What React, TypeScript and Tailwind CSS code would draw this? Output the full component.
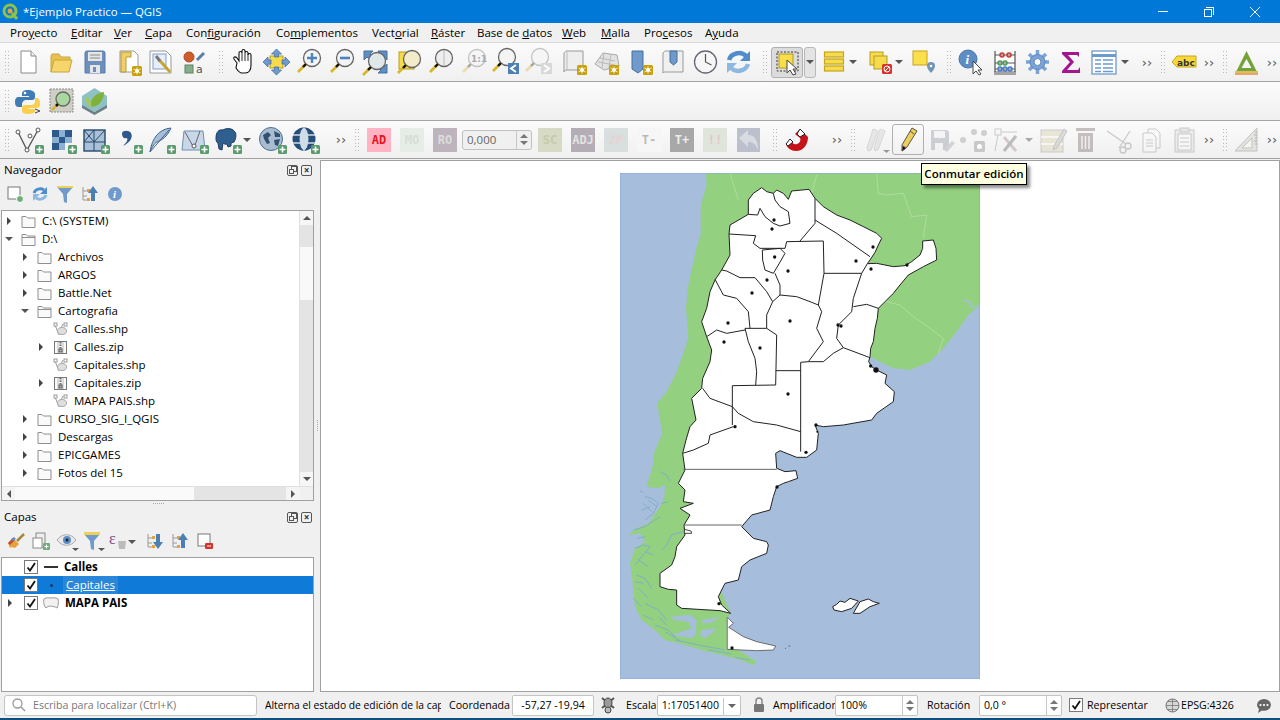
import React from "react";

const S = ({ w = 33, h = 32, children }: { w?: number; h?: number; children: React.ReactNode }) => (
  <svg width={w} height={h} viewBox={`0 0 ${w} ${h}`} className="block shrink-0">{children}</svg>
);
const Slot = ({ className = "w-[33px]", children }: { className?: string; children?: React.ReactNode }) => (
  <div className={`${className} shrink-0 flex items-center justify-center overflow-visible`}>{children}</div>
);
const Grip = ({ className = "" }: { className?: string }) => (
  <div className={`${className} w-[4px] h-[22px] shrink-0 grid grid-cols-2 gap-[1px] content-between`}>
    {Array.from({ length: 14 }).map((_, i) => <span key={i} className="w-[1px] h-[1px] bg-[#b8b8b8]" />)}
  </div>
);
const Arrow = ({ className = "w-[8px] ml-0", dim = false }: { className?: string; dim?: boolean }) => (
  <div className={`${className} shrink-0 flex justify-center`}>
    <div className={`w-0 h-0 border-x-[4px] border-x-transparent border-t-[4px] ${dim ? "border-t-[#a8a8a8]" : "border-t-[#555555]"}`} />
  </div>
);
const More = ({ className = "" }: { className?: string }) => (
  <div className={`${className} w-[16px] shrink-0 text-center text-[13px] leading-none text-[#555555] font-['DejaVu_Sans',sans-serif]`}>››</div>
);
const Badge = ({ x = 22, y = 21 }: { x?: number; y?: number }) => (
  <g>
    <rect x={x} y={y} width="10" height="10" rx="1.5" fill="#c9a008" />
    <circle cx={x + 5} cy={y + 5} r="2" fill="#fff" />
    <path d={`M${x + 5} ${y + 1.5}v7M${x + 1.5} ${y + 3}l7 4M${x + 8.5} ${y + 3}l-7 4`} stroke="#fff" strokeWidth=".8" />
  </g>
);
const Plus = ({ x = 22, y = 21 }: { x?: number; y?: number }) => (
  <g>
    <rect x={x} y={y} width="9" height="9" rx="1.5" fill="#5b9a6d" />
    <path d={`M${x + 4.5} ${y + 1.5}v6M${x + 1.5} ${y + 4.5}h6`} stroke="#fff" strokeWidth="1.6" />
  </g>
);
const Mag = ({ dim = false, cx = 19, cy = 12, fill = "#f4f4f4" }: { dim?: boolean; cx?: number; cy?: number; fill?: string }) => (
  <g opacity={dim ? 0.35 : 1}>
    <circle cx={cx} cy={cy} r="8.5" fill={fill} stroke="#666" strokeWidth="1.3" />
    <path d={`M${cx - 6} ${cy + 6}L${cx - 14} ${cy + 14}`} stroke="#d8b52a" strokeWidth="2.6" />
    <path d={`M${cx - 6} ${cy + 6}L${cx - 9} ${cy + 9}`} stroke="#111" strokeWidth="2.4" />
  </g>
);

const I: Record<string, React.ReactNode> = {
  doc: <S><path d="M9 5h10l5 5v17H9z" fill="#fff" stroke="#8a8a8a" /><path d="M19 5v5h5" fill="#eee" stroke="#8a8a8a" /></S>,
  open: <S><path d="M6 26V10l1-2h7l2 3h9v4" fill="#e8c14f" stroke="#c8a63c" /><path d="M6 26l3-12h18l-3 12z" fill="#f6d56a" stroke="#c8a63c" /></S>,
  save: <S><path d="M7 7a2 2 0 012-2h16a2 2 0 012 2v20H7z" fill="#6d8fbb" stroke="#5a7ba6" /><rect x="10" y="6" width="14" height="9" fill="#e6e6e6" /><path d="M12 9h10M12 12h10" stroke="#888" /><rect x="12" y="19" width="10" height="8" fill="#e6e6e6" /><rect x="15" y="21" width="3" height="5" fill="#6d8fbb" /></S>,
  layout: <S><path d="M9 5h14l4 4v17H9z" fill="#fff" stroke="#999" /><path d="M10 6h10v5h-5v15h-5z" fill="#f2cf66" stroke="#b79a3a" /><Badge x={21} y={20} /></S>,
  manager: <S><path d="M6 5h16l5 5v17H6z" fill="#fff" stroke="#999" /><rect x="9" y="8" width="13" height="15" fill="#e7eefa" stroke="#7d9ccc" /><path d="M15 14l4 4 7 8" stroke="#c7a234" strokeWidth="3" fill="none" /><path d="M12 10l4 5" stroke="#777" strokeWidth="3" /></S>,
  style: <S><circle cx="12" cy="11" r="5" fill="#cf5c2a" stroke="#a94a22" /><path d="M20 14l7-7" stroke="#5b7ea8" strokeWidth="3" /><rect x="8" y="19" width="8" height="8" fill="#84ad8b" stroke="#5d8465" /><text x="19" y="27" fontSize="11" fill="#555" fontFamily="DejaVu Sans">a</text></S>,
  hand: <S><path d="M10 17l-3-4c-1-2 1-3 3-1l2 3V7c0-2 3-2 3 0V5c0-2 3-2 3 0v2c0-2 3-2 3 0v2c0-2 3-2 3 0v10c0 5-2 8-6 8h-3c-3 0-4-2-6-5z" fill="#fff" stroke="#111" strokeWidth="1.1" /><path d="M15 7v8M18 7v8M21 8v7" stroke="#111" strokeWidth=".9" /></S>,
  pan: <S><rect x="10" y="10" width="13" height="12" fill="#f6dc4c" stroke="#b59b22" /><path d="M16.500 3l5 5h-3v3h-4V8h-3zM16.500 29l5-5h-3v-3h-4v3h-3zM3 16l5-5v3h3v4H8v3zM30 16l-5-5v3h-3v4h3v3z" fill="#6f9acb" stroke="#44709f" strokeWidth=".8" /></S>,
  zin: <S><Mag /><path d="M19 7v10M14 12h10" stroke="#4d84bf" strokeWidth="2.4" /></S>,
  zout: <S><Mag /><path d="M14 12h10" stroke="#4d84bf" strokeWidth="2.6" /></S>,
  zfull: <S><path d="M5 5h9l-3 3 3 3-3 3-3-3-3 3z M28 5v9l-3-3-3 3-3-3 3-3-3-3z M28 27h-9l3-3-3-3 3-3 3 3 3-3z" fill="#5f8ec4" stroke="#44709f" /><Mag cx={18} cy={15} fill="#dfe7e8" /></S>,
  zsel: <S><rect x="7" y="6" width="15" height="17" fill="#f6dc4c" stroke="#b59b22" /><Mag cx={20} cy={13} fill="#f3eccb" /></S>,
  zlayer: <S><Mag cx={19} cy={12} fill="#eeeeee" /><path d="M19 4v16" stroke="#bbb" /></S>,
  znat: <S><Mag dim /><text x="13" y="16" fontSize="9" fontWeight="700" fill="#aaa" fontFamily="DejaVu Sans">1:1</text></S>,
  zlast: <S><Mag cx={16} cy={11} /><rect x="17" y="17" width="11" height="11" fill="#4d7fb5" /><path d="M25 19l-5 3.500 5 3.500" stroke="#fff" strokeWidth="2" fill="none" /></S>,
  znext: <S><Mag dim cx={16} cy={11} /><rect x="17" y="17" width="11" height="11" fill="#d8d8d8" /><path d="M20 19l5 3.500-5 3.500" stroke="#fff" strokeWidth="2" fill="none" /></S>,
  mapnew: <S><path d="M7 8c0-3 3-3 3-3h16v19H10c-2 0-3 1-3 2z" fill="#eeeeee" stroke="#999" /><path d="M10 5v19" stroke="#bbb" /><Badge x={20} y={19} /></S>,
  map3d: <S><path d="M5 18l8-11 14 2 2 11-15 4z" fill="#e2e2e2" stroke="#aaa" /><path d="M10 12l15 3M8 16l17 3M14 7l-2 15M21 8l-2 14" stroke="#bbb" /><Badge x={19} y={19} /></S>,
  bmnew: <S><path d="M9 5h11v18l-5 4-6-4z" fill="#6f9acb" stroke="#44709f" /><Badge x={20} y={19} /></S>,
  bmshow: <S><path d="M7 8c0-3 3-3 3-3h17v21H10c-2 0-3 0-3 1z" fill="#f0f0f0" stroke="#999" /><path d="M14 5h7v11l-3.500 3-3.500-3z" fill="#6f9acb" stroke="#44709f" /></S>,
  clock: <S><circle cx="16.5" cy="16" r="11" fill="#f6f6f6" stroke="#667" strokeWidth="1.3" /><path d="M16.500 8v8l6 3" stroke="#555" strokeWidth="1.2" fill="none" /></S>,
  refresh: <S><path d="M7 14a10 9 0 0117-4" fill="none" stroke="#4f8cc9" strokeWidth="4.500" /><path d="M28 5v10H18z" fill="#4f8cc9" /><path d="M26 18a10 9 0 01-17 4" fill="none" stroke="#8db8e0" strokeWidth="4.500" /><path d="M5 27V17h10z" fill="#8db8e0" /></S>,
  select: <S><rect x="6" y="6" width="21" height="19" fill="none" stroke="#333" strokeDasharray="2 1.500" /><rect x="8" y="8" width="14" height="14" fill="#f8de48" stroke="#b59b22" /><path d="M16 14l0 13 3-3 3 5 3-1-3-5h4z" fill="#fff" stroke="#444" /></S>,
  bars: <S w={22}><g fill="#f6dc4c" stroke="#c5a31a" strokeWidth="1.2"><rect x="1.500" y="6" width="19" height="5" /><rect x="1.500" y="13" width="19" height="5" /><rect x="1.500" y="20" width="19" height="5" /></g></S>,
  desel: <S><rect x="8" y="6" width="13" height="13" fill="#f6dc4c" stroke="#b59b22" /><rect x="12" y="10" width="13" height="13" fill="#f6dc4c" stroke="#b59b22" /><rect x="20" y="18" width="10" height="10" rx="1.500" fill="#d4342e" /><circle cx="25" cy="23" r="3" fill="none" stroke="#fff" /><path d="M23 25l4-4" stroke="#fff" /></S>,
  sloc: <S><rect x="7" y="5" width="14" height="14" fill="#fbe04c" stroke="#c5a31a" /><path d="M25 16a4 4 0 00-4 4c0 3 4 7 4 7s4-4 4-7a4 4 0 00-4-4z" fill="#6f96b8" /><circle cx="25" cy="20" r="1.300" fill="#fff" /></S>,
  identify: <S><circle cx="14" cy="13" r="9" fill="#5d8dc4" stroke="#4a76a8" /><text x="11.500" y="18" fontSize="13" fontWeight="700" fontStyle="italic" fill="#fff" fontFamily="Liberation Serif">i</text><path d="M19 15v13l3-3 3 4 2-1-3-4h4z" fill="#fff" stroke="#444" /></S>,
  abacus: <S><rect x="7" y="8" width="20" height="18" fill="#fff" /><path d="M7 5v21M27 5v21M6 26h22M6 28h22" stroke="#555" strokeWidth="1.200" /><path d="M7 9h20M7 17h20M7 23h20" stroke="#555" /><g fill="none" strokeWidth="1.500"><circle cx="14" cy="9" r="2" stroke="#c33" /><circle cx="21" cy="9" r="2" stroke="#c33" /><circle cx="12" cy="17" r="2" stroke="#4a9a5a" /><circle cx="17" cy="17" r="2" stroke="#4a9a5a" /><circle cx="12" cy="23" r="2" stroke="#47c" /><circle cx="17" cy="23" r="2" stroke="#47c" /><circle cx="22" cy="23" r="2" stroke="#47c" /></g></S>,
  gear: <S><g stroke="#7ba4d6" strokeWidth="3.500"><path d="M16.500 4v24M5 16h23M8 8l17 16M25 8L8 24" /></g><circle cx="16.500" cy="16" r="7.500" fill="#7ba4d6" stroke="#5a86bb" /><circle cx="16.500" cy="16" r="3.500" fill="#fff" stroke="#5a86bb" /></S>,
  sigma: <S><path d="M8 6h17v5l-2-2H14l6 7-7 8h11l2-3v6H8v-2l8-9-8-8z" fill="#a3168f" /></S>,
  table: <S><rect x="5" y="5" width="24" height="23" fill="#fff" stroke="#6f9acb" strokeWidth="1.300" /><path d="M5 9.500h24" stroke="#6f9acb" strokeWidth="3" /><path d="M8 14h6M16 14h10M8 18h6M16 18h10M8 22h6M16 22h10M8 25.500h6M16 25.500h10" stroke="#6f9acb" strokeWidth="1.300" /></S>,
  abc: <S w={30}><path d="M4 16l5-6h19v11H9z" fill="#f8d93a" stroke="#c8a41a" /><text x="9" y="19.500" fontSize="9" fontWeight="700" fill="#333" fontFamily="DejaVu Sans">abc</text></S>,
  tri: <S><path d="M16.500 5l10 20h-20z M16.500 13l-5 9h10z" fill="#74a23a" fillRule="evenodd" /><path d="M5 26h23" stroke="#c7b329" strokeWidth="1.500" /><path d="M5 28h23" stroke="#e8883a" strokeWidth="1.500" /></S>,
  py: <S><path d="M16 5c-5 0-6 2-6 4v2h7v1H7c-3 0-4 2-4 5s1 5 4 5h3v-3c0-2 2-4 4-4h6c2 0 3-1 3-3V9c0-2-3-4-7-4z" fill="#3f7cb5" /><circle cx="13" cy="8" r="1.300" fill="#fff" /><path d="M23 13v3c0 2-1 4-4 4h-6c-2 0-3 1-3 3v3c0 2 3 3 6 3 4 0 7-1 7-3v-2h-6v-1h8c3 0 3-3 3-5s-1-5-3-5z" fill="#f8cf4e" /><path d="M23 24l5 2-5 2" stroke="#444" fill="none" /></S>,
  meta: <S><rect x="5" y="4" width="23" height="23" fill="#cfcfc6" stroke="#888" strokeDasharray="2 1" /><circle cx="18" cy="14" r="7" fill="#a8d8a0" stroke="#666" strokeWidth="1.300" /><path d="M13 19l-6 6" stroke="#d8b52a" strokeWidth="2.500" /><path d="M13 19l-2 2" stroke="#111" strokeWidth="2.500" /></S>,
  qms: <S><path d="M4 19l12.500 8 12.500-8v4l-12.500 7L4 23z" fill="#6d8086" /><path d="M4 11l12.500-8L29 11v9l-12.500 7L4 20z" fill="#8ec0c4" /><path d="M14 22c-4-7 4-14 12-15 0 7-4 14-12 15z" fill="#7fb23a" /><path d="M13 22c-4-2-6-6-5-10 4 1 6 5 5 10z" fill="#a3c95e" /></S>,
  vec: <S><path d="M6 8l9 18 11-20" fill="none" stroke="#555" strokeWidth="1.300" /><circle cx="6" cy="8" r="2" fill="#fff" stroke="#555" /><circle cx="15" cy="26" r="2" fill="#fff" stroke="#555" /><circle cx="26" cy="6" r="2" fill="#fff" stroke="#555" /><circle cx="18" cy="12" r="2" fill="#fff" stroke="#555" /><Plus x={23} y={21} /></S>,
  rast: <S><g fill="#2d5a8a"><rect x="7" y="6" width="7" height="7" /><rect x="20" y="6" width="7" height="7" /><rect x="14" y="13" width="7" height="6" /><rect x="7" y="19" width="7" height="7" /></g><g fill="#8bb0d2"><rect x="14" y="6" width="6" height="7" /><rect x="7" y="13" width="7" height="6" /><rect x="20" y="13" width="7" height="6" /><rect x="14" y="19" width="6" height="7" /></g><Plus x={23} y={21} /></S>,
  mesh: <S><rect x="6" y="6" width="21" height="21" fill="#a9c0d8" stroke="#27496d" strokeWidth="1.400" /><path d="M6 18h21M16 6v21M6 6l10 12M16 6l-10 12M27 6l-11 12" stroke="#27496d" /><Plus x={23} y={21} /></S>,
  comma: <S><path d="M11 9c1-3 7-3 9 0 2 4 0 9-8 13 4-4 5-6 4-8-2 1-5 0-5-5z" fill="#2d5a8a" /><Plus x={23} y={21} /></S>,
  feather: <S><path d="M27 4C15 5 8 14 6 28c3-7 5-9 7-10 5-2 10-5 14-14z" fill="#a7bfd4" stroke="#3f658f" /><path d="M25 6L6 28" stroke="#3f658f" /><Plus x={23} y={21} /></S>,
  gpkg: <S><path d="M7 7h19l2 19H5z" fill="#c9d8e6" stroke="#6f8fb0" /><path d="M8 8l9 16 6-17" fill="none" stroke="#667" /><circle cx="17" cy="22" r="2" fill="#fff" stroke="#555" /><Plus x={23} y={21} /></S>,
  pg: <S><path d="M6 14c0-6 3-9 7-8 3-2 9-2 11 1 3 2 2 8 0 11l-3 1v3l-3 1-1-3c-2 1-4-1-4-1l-1 7-3-1-1-6c-2-1-2-3-2-5z" fill="#2e5f8f" stroke="#1d3f63" /><Plus x={23} y={21} /></S>,
  wms: <S><circle cx="16" cy="15" r="11.500" fill="#a9bdd2" stroke="#4c6f94" /><path d="M8 11l5-3 3 3-3 3 2 5-3 1-3-5zM19 7l6 3 0 3-5 0zM19 16l6-1-2 7-3-1z" fill="#33506f" /><Plus x={23} y={21} /></S>,
  wfs: <S><circle cx="16" cy="15" r="11.500" fill="#254e78" /><ellipse cx="16" cy="15" rx="5" ry="11.500" fill="#cfdde9" stroke="#254e78" /><path d="M5 11h22M5 19h22M16 3v24" stroke="#cfdde9" strokeWidth="1.400" /><Plus x={23} y={21} /></S>,
  magnet: <S><path d="M19 5l8 8c0 8-5 14-12 14-5 0-9-3-10-7l5-4c1 3 3 5 6 4 3-1 4-4 3-6l-5-4z" fill="#c4141a" /><path d="M19 5l5 5-5 3-3-3zM5 20l4-5 3 3-5 4z" fill="#fff" stroke="#222" /></S>,
  pens: <S><g opacity=".4"><path d="M14 5l5 2-7 19-3 1-1-3z" fill="#cfcfcf" stroke="#aaa" /><path d="M21 5l5 2-7 19-3 1-1-3z" fill="#cfcfcf" stroke="#aaa" /></g><path d="M24 26h7l-3.500 3z" fill="#999" /></S>,
  pen: <S><path d="M20 4l5 3-10 16-5 4 0-6z" fill="#ecd05a" stroke="#555" /><path d="M18 7l4 3M10 27l1-5 3 2z" stroke="#555" /></S>,
  savee: <S><g opacity=".3"><path d="M7 6h16l2 2v18H7z" fill="#6d7a88" /><rect x="10" y="7" width="11" height="7" fill="#eee" /><rect x="11" y="19" width="8" height="7" fill="#eee" /><path d="M20 26l8-9 3 2-8 9z" fill="#888" /></g></S>,
  nodes: <S><g fill="#cfcfcf"><circle cx="17" cy="8" r="3" /><circle cx="6" cy="16" r="3" /><circle cx="27" cy="9" r="3" /></g><rect x="17" y="17" width="11" height="11" rx="1.500" fill="#c8c8c8" /><circle cx="22.500" cy="22.500" r="2.500" fill="#fff" /></S>,
  tools: <S><g opacity=".4"><rect x="5" y="5" width="6" height="6" fill="none" stroke="#888" /><path d="M11 8h16M8 11l-3 16" stroke="#888" /><path d="M14 13l12 14" stroke="#a88" strokeWidth="3" /><path d="M26 12L14 27" stroke="#666" strokeWidth="3" /></g></S>,
  attr: <S><g opacity=".45"><rect x="5" y="6" width="22" height="22" fill="#d8d2b0" stroke="#999" /><path d="M5 13h22M5 20h22" stroke="#fff" strokeWidth="1.500" /><path d="M18 22l10-17 3 2-10 17-4 2z" fill="#bbb" stroke="#888" /></g></S>,
  trash: <S><g opacity=".4" fill="#7a6a6a"><rect x="7" y="4" width="19" height="3" /><path d="M9 9h15v19H9z" /></g><path d="M13 12v13M16.500 12v13M20 12v13" stroke="#f0f0f0" strokeWidth="1.500" /></S>,
  cut: <S><g opacity=".4" stroke="#888" fill="none" strokeWidth="1.300"><circle cx="26" cy="22" r="3" /><circle cx="21" cy="26" r="3" /><path d="M5 7l19 13M28 7L17 24" /></g></S>,
  copy: <S><g opacity=".4" fill="#fafafa" stroke="#888"><path d="M13 5h8l4 4v15H13z" /><path d="M8 9h9l4 4v15H8z" /><path d="M11 16h7M11 19h7M11 22h7" /></g></S>,
  paste: <S><g opacity=".4" stroke="#888"><rect x="7" y="6" width="19" height="22" fill="#ddd" /><rect x="10" y="10" width="13" height="16" fill="#fafafa" /><rect x="12" y="4" width="9" height="4" fill="#ccc" /><path d="M12 14h9M12 18h9M12 22h9" /></g></S>,
  square: <S><g opacity=".55"><path d="M5 27L27 4v23z" fill="#d8d6cc" stroke="#999" /><path d="M12 24h10V14z" fill="#f4f4f4" stroke="#999" /><path d="M25 8h2M24 11h3M25 14h2M24 17h3M25 20h2" stroke="#777" /></g></S>,
};

const NAV = {
  add: <S w={20} h={20}><rect x="3" y="3" width="12" height="12" fill="#fff" stroke="#777" /><circle cx="15" cy="15" r="3.500" fill="#6fae7b" stroke="#fff" /></S>,
  ref: <S w={20} h={20}><path d="M4 9a6.500 6 0 0110-3" fill="none" stroke="#4f8cc9" strokeWidth="3" /><path d="M17 3v7h-7z" fill="#4f8cc9" /><path d="M16 11a6.500 6 0 01-10 3" fill="none" stroke="#8db8e0" strokeWidth="3" /><path d="M3 17v-7h7z" fill="#8db8e0" /></S>,
  filter: <S w={20} h={20}><path d="M2 3h16l-6 7v9l-3-1-1-8z" fill="#6f9acb" /><path d="M2 2h16v2H2z" fill="#ecd05a" /></S>,
  up: <S w={20} h={20}><path d="M3 3v13h4M3 7h4M3 12h4" fill="none" stroke="#999" /><rect x="7" y="5" width="3" height="3" fill="#e8a23a" /><rect x="7" y="14" width="3" height="3" fill="#e8a23a" /><path d="M13 2l5 7h-3v8h-4V9H8z" fill="#4e7fb4" /></S>,
  down: <S w={20} h={20}><path d="M3 3v13h4M3 7h4M3 12h4" fill="none" stroke="#999" /><rect x="7" y="5" width="3" height="3" fill="#e8a23a" /><rect x="7" y="14" width="3" height="3" fill="#e8a23a" /><path d="M13 18l5-7h-3V3h-4v8H8z" fill="#4e7fb4" /></S>,
  info: <S w={20} h={20}><circle cx="10" cy="10" r="7" fill="#6f9acb" /><text x="8" y="14" fontSize="11" fontWeight="700" fontStyle="italic" fill="#fff" fontFamily="Liberation Serif">i</text></S>,
  brush: <S w={20} h={20}><path d="M2 12l5-5 6 6-4 4-3-1-2 1z" fill="#e8a23a" /><path d="M2 12l5-5 2 2-5 5z" fill="#c24a3a" /><path d="M5 8l3-2 2 2-3 2z" fill="#5d8ec4" /><path d="M11 10l7-7" stroke="#a8863a" strokeWidth="2.500" /></S>,
  addg: <S w={20} h={20}><rect x="5" y="2" width="9" height="14" fill="#eee" stroke="#888" /><rect x="2" y="7" width="9" height="10" fill="#fff" stroke="#888" /><rect x="12" y="12" width="7" height="7" rx="1" fill="#6fae7b" /><path d="M15.500 13.500v4M13.500 15.500h4" stroke="#fff" /></S>,
  eye: <S w={24} h={20}><path d="M1 9c5-7 14-7 19 0-5 7-14 7-19 0z" fill="#e9e9e9" stroke="#aaa" /><circle cx="11" cy="9" r="4" fill="#5d8dc4" /><circle cx="11" cy="9" r="1.500" fill="#223" /><path d="M16 17h7l-3.500 3z" fill="#555" /></S>,
  filt2: <S w={24} h={20}><path d="M2 3h16l-6 7v9l-3-1-1-8z" fill="#6f9acb" /><path d="M2 1h16v3H2z" fill="#ecd05a" /><path d="M16 17h7l-3.500 3z" fill="#555" /></S>,
  eps: <S w={20} h={20}><text x="1" y="13" fontSize="16" fill="#7a4a8a" fontFamily="Liberation Serif">ε</text><path d="M10 10h8l-1 8h-6z" fill="#bbb" /></S>,
  rm: <S w={20} h={20}><rect x="3" y="3" width="12" height="12" fill="#fff" stroke="#777" /><rect x="10" y="12" width="8" height="6" rx="1" fill="#d4342e" /><path d="M12 15h4" stroke="#fff" /></S>,
};

const Txt = ({ t, bg, fg, cls = "ml-[9px]" }: { t: string; bg: string; fg: string; cls?: string }) => (
  <div className={`${cls} ${bg} ${fg} w-[24px] h-[24px] shrink-0 flex items-center justify-center text-[12px] font-bold font-['DejaVu_Sans_Mono',monospace]`}>{t}</div>
);

const rowCls = "h-[39px] flex items-center border-b border-[#a3a3a3] bg-linear-to-b from-[#fbfbfb] to-[#f0f0f0] shrink-0";

const menu: [string, string, string, string][] = [
  ["Pro", "y", "ecto", "w-[61px]"], ["", "E", "ditar", "w-[43px]"], ["", "V", "er", "w-[31px]"], ["", "C", "apa", "w-[41px]"],
  ["Con", "f", "iguración", "w-[90px]"], ["Co", "m", "plementos", "w-[96px]"], ["Vect", "o", "rial", "w-[59px]"], ["", "R", "áster", "w-[46px]"],
  ["Base de ", "d", "atos", "w-[85px]"], ["", "W", "eb", "w-[39px]"], ["", "M", "alla", "w-[43px]"], ["Pro", "c", "esos", "w-[61px]"], ["A", "y", "uda", "w-[50px]"],
];

const Tri = ({ open = false }: { open?: boolean }) =>
  open ? <div className="w-0 h-0 border-x-[4px] border-x-transparent border-t-[4px] border-t-[#555555]" /> : <div className="w-0 h-0 border-y-[4px] border-y-transparent border-l-[4px] border-l-[#444444]" />;

const Folder = ({ open = false }: { open?: boolean }) => (
  <S w={15} h={15}>
    <path d="M1 13.500V2.500h4l1.500 1.500h7.500v9.500z" fill="#fafafa" stroke="#8f8f8f" />
    {open && <path d="M1 5.500h13" stroke="#8f8f8f" />}
  </S>
);
const ShpIcon = () => (
  <S w={15} h={15}>
    <path d="M2 3l4 10M10 2L5 12" stroke="#999" fill="none" />
    <ellipse cx="9" cy="9" rx="4.500" ry="3.500" fill="#dedede" stroke="#aaa" />
    <rect x="1" y="1" width="3" height="3" fill="#fff" stroke="#999" /><rect x="11" y="1" width="3" height="3" fill="#fff" stroke="#999" />
  </S>
);
const ZipIcon = () => (
  <S w={15} h={15}>
    <rect x="1.500" y="1.500" width="12" height="12" fill="#fafafa" stroke="#777" />
    <path d="M5 2v11" stroke="#bbb" /><path d="M10 2v11" stroke="#bbb" />
    <path d="M7.500 2v7" stroke="#666" strokeDasharray="1.500 1" strokeWidth="2" />
    <rect x="6" y="9" width="3" height="3" fill="#bbb" stroke="#555" />
  </S>
);

const tree: { t: string; lv: 0 | 1 | 2; k: "f" | "o" | "s" | "z"; a?: "r" | "d" }[] = [
  { t: "C:\\ (SYSTEM)", lv: 0, k: "f", a: "r" }, { t: "D:\\", lv: 0, k: "o", a: "d" },
  { t: "Archivos", lv: 1, k: "f", a: "r" }, { t: "ARGOS", lv: 1, k: "f", a: "r" }, { t: "Battle.Net", lv: 1, k: "f", a: "r" },
  { t: "Cartografia", lv: 1, k: "o", a: "d" }, { t: "Calles.shp", lv: 2, k: "s" }, { t: "Calles.zip", lv: 2, k: "z", a: "r" },
  { t: "Capitales.shp", lv: 2, k: "s" }, { t: "Capitales.zip", lv: 2, k: "z", a: "r" }, { t: "MAPA PAIS.shp", lv: 2, k: "s" },
  { t: "CURSO_SIG_I_QGIS", lv: 1, k: "f", a: "r" }, { t: "Descargas", lv: 1, k: "f", a: "r" }, { t: "EPICGAMES", lv: 1, k: "f", a: "r" },
  { t: "Fotos del 15", lv: 1, k: "f", a: "r" }, { t: "", lv: 1, k: "f" },
];
const indent = { 0: "pl-[2px]", 1: "pl-[18px]", 2: "pl-[34px]" };

const DockBtns = () => (
  <div className="flex gap-[3px]">
    <div className="w-[11px] h-[11px] border border-[#555555] rounded-[2px] relative"><div className="absolute left-[3px] top-[0px] w-[6px] h-[6px] border border-[#555555]" /><div className="absolute left-[1px] top-[3px] w-[5px] h-[5px] border border-[#555555] bg-[#f0f0f0]" /></div>
    <div className="w-[11px] h-[11px] border border-[#555555] rounded-[2px] flex items-center justify-center text-[10px] leading-none font-bold text-[#333333]">×</div>
  </div>
);
const CheckBox = () => (
  <div className="w-[14px] h-[14px] border border-[#7a7a7a] bg-white flex items-center justify-center shrink-0">
    <svg width="10" height="10" viewBox="0 0 10 10" className="block"><path d="M1.500 5.500l2.500 3 5-7.500" fill="none" stroke="#111" strokeWidth="1.800" /></svg>
  </div>
);
const Spin = () => (
  <div className="w-[15px] h-full border-l border-[#c8c8c8] flex flex-col items-center justify-center gap-[3px] shrink-0">
    <div className="w-0 h-0 border-x-[4px] border-x-transparent border-b-[4px] border-b-[#777777]" />
    <div className="w-0 h-0 border-x-[4px] border-x-transparent border-t-[4px] border-t-[#777777]" />
  </div>
);

const white = "415,105 430,85 455,68 470,80 490,85 500,75 520,85 535,103 545,78 597,73 615,100 640,125 680,150 720,165 760,185 800,205 815,220 805,240 795,262 780,285 772,296 800,295 850,305 885,302 905,290 930,270 938,250 938,228 970,225 978,250 980,285 940,305 895,330 870,360 850,385 825,410 805,430 802,460 795,490 790,530 782,550 780,575 776,590 785,605 800,615 830,630 825,655 853,680 850,710 800,745 785,765 700,780 640,785 615,780 625,805 620,855 590,877 560,877 510,857 497,865 500,910 525,920 558,917 563,940 535,950 520,955 500,965 490,995 480,1035 425,1050 395,1085 430,1120 470,1130 475,1140 470,1165 420,1185 395,1205 385,1245 345,1255 325,1295 335,1320 362,1345 330,1337 215,1330 200,1320 200,1275 175,1273 150,1265 150,1225 185,1200 195,1175 200,1145 225,1110 222,1080 240,1050 210,1030 250,1015 220,1010 225,975 205,955 225,915 218,865 228,825 240,785 258,765 245,700 275,670 278,640 300,590 305,555 290,515 275,470 290,430 300,380 315,345 335,315 360,270 357,207 360,180 415,148";
const lines = [
  "490,85 495,105 510,125 535,140 540,175 510,183 490,175 465,155 450,130 443,150 415,148",
  "357,207 437,212 430,235 450,250 525,250", "457,255 510,250 525,265 505,300 490,325 465,315 458,285 457,255",
  "530,230 640,228 642,325 625,420 600,410 560,395 510,390 510,360 495,325", "530,230 525,250", "570,228 615,175 615,100", "615,165 680,205 780,275",
  "642,325 755,325 772,296", "625,420 635,440 620,490 640,530 595,590", "755,325 730,400 725,440 685,480 680,520 700,548 670,565 640,590 595,590 572,592 572,860",
  "805,430 770,418 730,425", "700,548 780,578", "335,315 350,318 390,338 435,338 470,380 488,410 470,450 470,490 405,490", "488,410 510,390",
  "315,343 340,390 380,400 415,440 420,490", "290,515 320,495 350,505 405,495", "405,490 415,530 435,580 440,620 437,660", "470,490 500,510 497,660",
  "367,662 497,660", "497,617 572,617", "278,670 300,700 367,725 385,745 430,770 500,780 572,800", "367,662 367,780", "218,865 250,855 295,835 300,810 370,785",
];
const pdots: [number, number, number?][] = [[492,165],[486,192],[494,276],[534,318],[471,345],[426,384],[354,474],[342,531],[450,549],[540,468],[534,687],[738,288],[789,246],[783,312],[891,300],[684,480],[693,483],[782,603],[798,615,8],[618,780],[375,785],[588,862],[622,800,3],[501,966],[327,1316],[366,1449]];
const chan1 = [
  "105,5 125,15 135,35", "60,80 80,85 100,100 85,130 60,150", "70,90 95,110", "50,120 75,110", "55,100 80,125", "110,100 130,95", "25,180 60,170 90,150 105,140", "175,185 140,195 125,225 110,240",
  "30,235 55,225 75,230 50,260 30,285", "60,245 85,255", "45,62 55,68", "35,205 60,200", "40,270 70,290",
];
const chan2 = [
  "150,210 220,225 300,240", "250,240 320,252", "90,165 130,180 150,200", "60,100 100,120 125,150", "40,55 70,85", "30,35 55,40", "25,85 50,110", "55,135 85,150", "35,15 60,25 80,55", "100,140 125,165", "120,185 170,215", "330,262 375,270",
];
const statusText = "pt-[2px] shrink-0";

export default function App() {
  return (
    <div className="relative w-[1280px] h-[720px] overflow-hidden flex flex-col bg-[#f0f0f0] text-[11.5px] text-black font-['Open_Sans',sans-serif]">
      {/* title bar */}
      <div className="h-[23px] bg-[#0078d7] flex items-center text-white shrink-0">
        <div className="w-[23px] pl-[2px] shrink-0">
          <svg width="17" height="17" viewBox="0 0 17 17" className="block"><circle cx="8" cy="8" r="6" fill="none" stroke="#8fc04a" strokeWidth="3" /><path d="M10 10l5 6" stroke="#8fc04a" strokeWidth="3" /><circle cx="8" cy="8" r="2.500" fill="#e8a23a" /></svg>
        </div>
        <div className="text-[11.4px]">*Ejemplo Practico — QGIS</div>
        <div className="ml-auto flex items-center mr-[2px]">
          <div className="w-[46px] flex justify-center"><div className="w-[10px] h-[1px] bg-white" /></div>
          <div className="w-[46px] relative h-[10px]"><div className="absolute left-[18px] top-[2px] w-[8px] h-[8px] border border-white" /><div className="absolute left-[20px] top-0 w-[8px] h-[8px] border-t border-r border-white" /></div>
          <div className="w-[46px] flex justify-center"><svg width="10" height="10" viewBox="0 0 10 10" className="block"><path d="M0 0l10 10M10 0L0 10" stroke="#fff" /></svg></div>
        </div>
      </div>
      {/* menu */}
      <div className="h-[20px] flex items-center pl-[10px] border-b border-[#d9d9d9] bg-[#f0f0f0] shrink-0">
        {menu.map(([a, b, c, w], i) => (
          <div key={i} className={`${w} whitespace-nowrap shrink-0`}>{a}<u>{b}</u>{c}</div>
        ))}
      </div>
      {/* row 1 */}
      <div className={rowCls}>
        <Grip className="ml-[5px] mr-[3px]" />
        {["doc", "open", "save", "layout", "manager", "style"].map(k => <Slot key={k}>{I[k]}</Slot>)}
        <Grip className="ml-[9px] mr-[4px]" />
        {["hand", "pan", "zin", "zout", "zfull", "zsel", "zlayer", "znat", "zlast", "znext", "mapnew", "map3d", "bmnew", "bmshow", "clock", "refresh"].map(k => <Slot key={k}>{I[k]}</Slot>)}
        <Grip className="ml-[8px] mr-[4px]" />
        <div className="w-[32px] h-[31px] bg-[#dcdcdc] border border-[#b0b0b0] rounded-[3px] flex items-center justify-center shrink-0">{I.select}</div>
        <div className="w-[12px] h-[31px] ml-[1px] bg-[#e4e4e4] border border-[#b8b8b8] rounded-[3px] flex items-center justify-center shrink-0"><div className="w-0 h-0 border-x-[4px] border-x-transparent border-t-[4px] border-t-[#555555]" /></div>
        <Slot className="w-[31px] ml-[2px]">{I.bars}</Slot>
        <Arrow />
        <Slot className="w-[32px] ml-[5px]">{I.desel}</Slot>
        <Arrow className="w-[8px] ml-[1px]" />
        <Slot className="w-[32px] ml-[3px]">{I.sloc}</Slot>
        <Grip className="ml-[9px] mr-[4px]" />
        <Slot className="w-[30px]">{I.identify}</Slot>
        <Slot className="w-[33px] ml-[3px]">{I.abacus}</Slot>
        <Slot>{I.gear}</Slot>
        <Slot>{I.sigma}</Slot>
        <Slot>{I.table}</Slot>
        <Arrow className="w-[8px] ml-[1px]" />
        <More className="ml-[10px]" />
        <Grip className="ml-[6px]" />
        <Slot className="w-[30px] ml-[3px]">{I.abc}</Slot>
        <More className="ml-[3px]" />
        <Grip className="ml-[6px]" />
        <Slot className="w-[33px] ml-[3px]">{I.tri}</Slot>
        <More className="ml-[1px]" />
      </div>
      {/* row 2 */}
      <div className={rowCls}>
        <Grip className="ml-[5px] mr-[3px]" />
        {["py", "meta", "qms"].map(k => <Slot key={k}>{I[k]}</Slot>)}
      </div>
      {/* row 3 */}
      <div className="h-[38px] flex items-center border-b border-[#a3a3a3] bg-linear-to-b from-[#fbfbfb] to-[#f0f0f0] shrink-0">
        <Grip className="ml-[5px] mr-[3px]" />
        {["vec", "rast", "mesh", "comma", "feather", "gpkg", "pg"].map(k => <Slot key={k}>{I[k]}</Slot>)}
        <Arrow />
        <Slot className="w-[33px] ml-[4px]">{I.wms}</Slot>
        <Slot>{I.wfs}</Slot>
        <More className="ml-[12px]" />
        <Grip className="ml-[6px]" />
        <Txt t="AD" bg="bg-[#ffb3c3]" fg="text-[#e8141e]" cls="ml-[8px]" />
        <Txt t="MO" bg="bg-[#e6ece6]" fg="text-[#d8dcd8]" />
        <Txt t="RO" bg="bg-[#bdb4bd]" fg="text-[#dcdcdc]" />
        <div className="ml-[5px] w-[70px] h-[20px] border border-[#c0c0c0] rounded-[3px] bg-[#f0f0f0] flex items-center justify-between pl-[4px] shrink-0 text-[#666666]">
          <span>0,000</span><Spin />
        </div>
        <Txt t="SC" bg="bg-[#d7dac4]" fg="text-[#c6caac]" cls="ml-[6px]" />
        <Txt t="ADJ" bg="bg-[#b5adb5]" fg="text-[#e2e2e2]" />
        <Txt t="2P" bg="bg-[#d9dfde]" fg="text-[#e6d4d4]" />
        <Txt t="T-" bg="bg-[#f6f6f6]" fg="text-[#b8b8b8]" />
        <Txt t="T+" bg="bg-[#a8a8a8]" fg="text-[#eeeeee]" />
        <Txt t="!!" bg="bg-[#dfe5da]" fg="text-[#e0c8c8]" />
        <div className="ml-[10px] w-[23px] h-[24px] bg-[#bcc0cd] flex items-center justify-center shrink-0">
          <svg width="23" height="24" viewBox="0 0 23 24" className="block"><path d="M2 10l9-8v5c6 0 10 4 10 15-2-6-5-8-10-8v5z" fill="#d8dbe2" /></svg>
        </div>
        <Grip className="ml-[13px]" />
        <Slot className="w-[33px] ml-[4px]">{I.magnet}</Slot>
        <More className="ml-[15px]" />
        <Grip className="ml-[6px]" />
        <Slot className="w-[30px] ml-[5px]">{I.pens}</Slot>
        <div className="w-[32px] h-[31px] ml-[2px] border border-[#b0b0b0] rounded-[3px] flex items-center justify-center shrink-0">{I.pen}</div>
        <Slot>{I.savee}</Slot>
        <Slot>{I.nodes}</Slot>
        <Slot>{I.tools}</Slot>
        <Arrow dim className="w-[8px] ml-[2px]" />
        <Slot className="w-[33px] ml-[3px]">{I.attr}</Slot>
        <Slot>{I.trash}</Slot>
        <Slot>{I.cut}</Slot>
        <Slot>{I.copy}</Slot>
        <Slot>{I.paste}</Slot>
        <More />
        <Grip className="ml-[6px]" />
        <Slot className="w-[33px] ml-[3px]">{I.square}</Slot>
        <More className="ml-[1px]" />
      </div>

      {/* main */}
      <div className="flex-1 min-h-0 flex">
        <div className="w-[315px] shrink-0 flex flex-col">
          <div className="h-[22px] flex items-center justify-between pl-[4px] pr-[3px] shrink-0">
            <span>Navegador</span><DockBtns />
          </div>
          <div className="h-[29px] flex items-start pt-[3px] pl-[5px] gap-[5px] shrink-0">
            {[NAV.add, NAV.ref, NAV.filter, NAV.up, NAV.info].map((n, i) => <div key={i}>{n}</div>)}
          </div>
          <div className="h-[291px] mx-[1px] border border-[#a0a0a0] bg-white flex flex-col shrink-0">
            <div className="flex-1 min-h-0 flex">
              <div className="flex-1 overflow-hidden pt-[1px]">
                {tree.map((r, i) => (
                  <div key={i} className={`${indent[r.lv]} h-[18px] flex items-center whitespace-nowrap`}>
                    <div className="w-[10px] flex justify-center shrink-0">{r.a === "r" ? <Tri /> : r.a === "d" ? <Tri open /> : null}</div>
                    <div className="ml-[7px] shrink-0">{r.k === "f" ? <Folder /> : r.k === "o" ? <Folder open /> : r.k === "s" ? <ShpIcon /> : <ZipIcon />}</div>
                    <span className="ml-[6px]">{r.t}</span>
                  </div>
                ))}
              </div>
              <div className="w-[14px] border-l border-[#e0e0e0] flex flex-col shrink-0 bg-[#e4e4e4]">
                <div className="h-[14px] bg-[#f6f6f6] flex items-center justify-center shrink-0"><div className="w-0 h-0 border-x-[4px] border-x-transparent border-b-[4px] border-b-[#555555]" /></div>
                <div className="h-[22px] bg-[#e4e4e4] shrink-0" />
                <div className="h-[53px] bg-[#f9f9f9] shrink-0" />
                <div className="flex-1" />
                <div className="h-[14px] bg-[#f6f6f6] flex items-center justify-center shrink-0"><div className="w-0 h-0 border-x-[4px] border-x-transparent border-t-[4px] border-t-[#555555]" /></div>
              </div>
            </div>
            <div className="h-[14px] flex border-t border-[#e0e0e0] bg-[#e4e4e4] shrink-0">
              <div className="w-[13px] bg-[#f4f4f4] flex items-center justify-center shrink-0"><div className="w-0 h-0 border-y-[4px] border-y-transparent border-r-[4px] border-r-[#555555]" /></div>
              <div className="w-[179px] bg-[#fafafa] shrink-0" />
              <div className="w-[92px] shrink-0" />
              <div className="w-[14px] bg-[#f4f4f4] flex items-center justify-center shrink-0"><div className="w-0 h-0 border-y-[4px] border-y-transparent border-l-[4px] border-l-[#555555]" /></div>
              <div className="flex-1 bg-[#f0f0f0]" />
            </div>
          </div>
          <div className="h-[5px] flex justify-center items-center gap-[1px] shrink-0 pl-[2px]">
            {[0, 1, 2, 3, 4, 5].map(i => <span key={i} className="w-[1px] h-[1px] bg-[#aaaaaa]" />)}
          </div>
          <div className="h-[22px] flex items-center justify-between pl-[4px] pr-[3px] shrink-0">
            <span>Capas</span><DockBtns />
          </div>
          <div className="h-[29px] flex items-start pt-[3px] pl-[6px] shrink-0">
            <div className="w-[25px]">{NAV.brush}</div>
            <div className="w-[25px]">{NAV.addg}</div>
            <div className="w-[26px]">{NAV.eye}</div>
            <div className="w-[26px]">{NAV.filt2}</div>
            <div className="w-[20px]">{NAV.eps}</div>
            <Arrow className="w-[8px] mr-[9px] mt-[9px]" />
            <div className="w-[25px]">{NAV.down}</div>
            <div className="w-[25px]">{NAV.up}</div>
            <div className="w-[20px]">{NAV.rm}</div>
          </div>
          <div className="flex-1 min-h-0 mx-[1px] border border-[#a0a0a0] bg-white overflow-hidden">
            <div className="h-[18px] flex items-center">
              <div className="ml-[22px]"><CheckBox /></div>
              <div className="ml-[6px] w-[14px] h-[2px] bg-[#333333]" />
              <span className="ml-[6px] font-bold">Calles</span>
            </div>
            <div className="h-[18px] flex items-center bg-[#0f7ad8] text-white">
              <div className="ml-[22px]"><CheckBox /></div>
              <div className="ml-[12px] w-[3px] h-[3px] rounded-full bg-[#123a66]" />
              <span className="ml-[10px] pl-[3px] underline h-full flex items-center bg-[#2a86d8] pr-[3px]">Capitales</span>
            </div>
            <div className="h-[18px] flex items-center">
              <div className="ml-[6px] w-[16px]"><Tri /></div>
              <CheckBox />
              <div className="ml-[5px] shrink-0"><S w={16} h={14}><path d="M1 3c3-2 5-1 7-1s4-1 7 1c1 3 0 8-1 9-3-2-9-3-11 0-2-2-3-6-2-9z" fill="#f2f2f2" stroke="#999" /></S></div>
              <span className="ml-[6px] font-bold">MAPA PAIS</span>
            </div>
          </div>
        </div>
        {/* splitter */}
        <div className="w-[5px] shrink-0 flex flex-col items-center justify-center gap-[1px]">
          {[0, 1, 2, 3, 4, 5].map(i => <span key={i} className="w-[1px] h-[1px] bg-[#aaaaaa]" />)}
        </div>
        {/* canvas */}
        <div className="flex-1 min-w-0 mt-[1px] border border-[#a0a0a0] bg-white flex pt-[12px] pl-[299px]">
          <svg width="360" height="506" viewBox="30 24 1080 1518" className="block shrink-0">
            <rect x="30" y="24" width="1080" height="1518" fill="#a6bedc" />
            <path d="M288,25 290,60 272,120 272,210 262,240 250,290 235,360 228,430 235,520 222,560 200,620 170,680 142,715 150,765 157,805 132,865 130,895 125,915 110,965 145,970 165,960 163,995 150,1025 115,1075 80,1090 55,1110 90,1105 105,1130 75,1150 60,1195 65,1225 70,1275 75,1325 95,1365 135,1395 165,1425 225,1440 295,1460 375,1480 430,1500 440,1490 385,1455 353,1453 352,1357 362,1345 300,1200 300,1000 300,800 700,760 780,575 850,610 900,615 960,590 1000,550 1040,500 1075,450 1110,420 1110,25Z" fill="#93d07f" />
            <path d="M1060,405 1080,412 1085,430 1108,420" fill="none" stroke="#a6bedc" strokeWidth="4" />
            <g fill="none" stroke="#cbe9c0" strokeWidth="1.500">
              <path d="M360,25 385,105" /><path d="M620,30 605,85" />
              <path d="M800,25 805,85 830,90 880,85 905,155 950,150 940,220" />
              <path d="M830,410 870,420 910,455 960,490 1000,520 985,565" />
            </g>
            <g transform="translate(45,915)" fill="none" stroke="#80aecb" strokeWidth="3" strokeLinejoin="round">
              {chan1.map((c, i) => <polyline key={i} points={c} />)}
            </g>
            <g transform="translate(45,1215)">
              <g fill="#a6bedc">
                <polygon points="135,140 195,135 215,150 212,195 200,205 140,195 170,185 200,175 190,155 150,150" />
                <polygon points="230,150 265,145 285,140 260,158 235,160" />
                <polygon points="230,180 275,175 260,190 240,205 225,195" />
              </g>
              <g fill="none" stroke="#80aecb" strokeWidth="3" strokeLinejoin="round">
                {chan2.map((c, i) => <polyline key={i} points={c} />)}
              </g>
            </g>
            <polygon points={white} fill="#fff" stroke="#222" strokeWidth="3" strokeLinejoin="round" />
            <g fill="none" stroke="#222" strokeWidth="3" strokeLinejoin="round">
              {lines.map((l, i) => <polyline key={i} points={l} />)}
            </g>
            <path d="M220,913H500M225,1080H395" stroke="#666" strokeWidth="3" />
            <polygon points="223,1093 243,1098 245,1105 223,1105" fill="#fff" stroke="#222" strokeWidth="2.500" />
            <polygon points="352,1357 370,1375 356,1387 400,1415 440,1430 497,1443 490,1455 440,1457 352,1453" fill="#fff" stroke="#333" strokeWidth="2" />
            <path d="M352,1357V1453" stroke="#999" strokeWidth="3" />
            <path d="M668,1325 680,1318 690,1308 705,1312 720,1300 745,1308 725,1330 695,1340 672,1335Z" fill="#fff" stroke="#222" strokeWidth="3" />
            <path d="M750,1310 775,1302 790,1310 808,1315 780,1325 750,1345 730,1345Z" fill="#fff" stroke="#222" strokeWidth="3" />
            <path d="M525,1450h3M535,1443h6" stroke="#444" strokeWidth="2" />
            {pdots.map(([x, y, r], i) => <circle key={i} cx={x} cy={y} r={r ?? 5} fill="#111" />)}
            <rect x="30" y="24" width="1080" height="1518" fill="none" stroke="#7fa8dc" strokeWidth="3" />
          </svg>
        </div>
      </div>

      {/* status */}
      <div className="h-[26px] flex items-center shrink-0 text-[10.6px]">
        <div className="ml-[4px] w-[253px] h-[21px] bg-white border border-[#c4c4c4] rounded-[3px] flex items-center pl-[6px] text-[#777777] shrink-0">
          <svg width="16" height="16" viewBox="0 0 16 16" className="block mr-[6px]"><circle cx="6.500" cy="6.500" r="4.500" fill="none" stroke="#999" strokeWidth="1.300" /><path d="M10 10l4 4" stroke="#999" strokeWidth="1.500" /></svg>
          <span className="pt-[1px]">Escriba para localizar (Ctrl+K)</span>
        </div>
        <div className={`ml-[8px] w-[176px] overflow-hidden whitespace-nowrap text-[10.3px] ${statusText}`}>Alterna el estado de edición de la capa</div>
        <div className={`ml-[8px] w-[63px] ${statusText}`}>Coordenada</div>
        <div className={`w-[82px] h-[21px] bg-white border border-[#c4c4c4] rounded-[2px] flex items-center justify-center ${statusText}`}>-57,27 -19,94</div>
        <div className="ml-[3px] w-[22px] flex justify-center shrink-0">
          <svg width="16" height="18" viewBox="0 0 16 18" className="block"><path d="M2 2l12 10M14 2L2 12" stroke="#555" strokeWidth="2" /><ellipse cx="8" cy="7" rx="4" ry="5" fill="#999" stroke="#444" /><circle cx="8" cy="14" r="3" fill="#bbb" stroke="#444" /></svg>
        </div>
        <div className={`ml-[7px] w-[31px] ${statusText}`}>Escala</div>
        <div className={`w-[84px] h-[21px] bg-white border border-[#c4c4c4] rounded-[2px] flex items-center overflow-hidden ${statusText}`}>
          <div className="w-[65px] overflow-hidden whitespace-nowrap flex justify-end pr-[4px]">1:17051400</div>
          <div className="flex-1 h-full border-l border-[#c4c4c4] flex items-center justify-center"><div className="w-0 h-0 border-x-[4px] border-x-transparent border-t-[4px] border-t-[#666666]" /></div>
        </div>
        <div className="ml-[11px] w-[14px] flex justify-center shrink-0">
          <svg width="12" height="16" viewBox="0 0 12 16" className="block"><path d="M3 7V4a3 3 0 016 0v3" fill="none" stroke="#888" strokeWidth="1.500" /><rect x="1" y="7" width="10" height="8" rx="1" fill="#777" /></svg>
        </div>
        <div className={`ml-[7px] w-[62px] ${statusText}`}>Amplificador</div>
        <div className="w-[83px] h-[21px] bg-white border border-[#c4c4c4] rounded-[2px] flex items-center justify-between pl-[4px] shrink-0"><span className="pt-[1px]">100%</span><Spin /></div>
        <div className={`ml-[9px] w-[52px] ${statusText}`}>Rotación</div>
        <div className="w-[83px] h-[21px] bg-white border border-[#c4c4c4] rounded-[2px] flex items-center justify-between pl-[4px] shrink-0"><span className="pt-[1px]">0,0 °</span><Spin /></div>
        <div className="ml-[7px]"><CheckBox /></div>
        <div className={`ml-[4px] w-[75px] ${statusText}`}>Representar</div>
        <div className="ml-[3px] shrink-0">
          <svg width="15" height="15" viewBox="0 0 15 15" className="block"><circle cx="7.500" cy="7.500" r="6.500" fill="#d8d8d8" stroke="#777" /><path d="M1 7.500h13M7.500 1v13M3 3.500h9M3 11.500h9" stroke="#777" strokeWidth=".8" /></svg>
        </div>
        <div className={`ml-[1px] w-[60px] ${statusText}`}>EPSG:4326</div>
        <div className="ml-[14px] shrink-0">
          <svg width="18" height="17" viewBox="0 0 18 17" className="block"><path d="M2 8a7 6 0 1114 0 7 6 0 01-9 5.500L3 16l1-4a6 6 0 01-2-4z" fill="#666" /><circle cx="5.500" cy="8" r="1.100" fill="#fff" /><circle cx="9" cy="8" r="1.100" fill="#fff" /><circle cx="12.500" cy="8" r="1.100" fill="#fff" /></svg>
        </div>
      </div>
      <div className="h-[2px] bg-[#10507f] shrink-0" />

      {/* tooltip */}
      <div className="absolute left-[921px] top-[163px] w-[106px] h-[22px] bg-[#ffffe1] border border-black flex items-center justify-center whitespace-nowrap font-semibold text-[11.5px] shadow-[3px_3px_3px_rgba(0,0,0,0.45)]">Conmutar edición</div>
    </div>
  );
}
